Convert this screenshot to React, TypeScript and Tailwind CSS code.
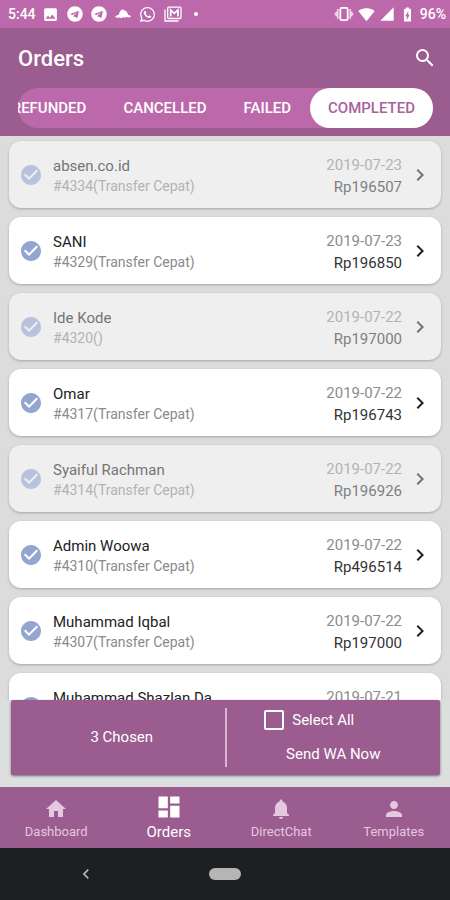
import { useState } from 'react';
import {
  MdBatteryChargingFull,
  MdCheckCircle,
  MdChevronLeft,
  MdChevronRight,
  MdDashboard,
  MdHome,
  MdImage,
  MdNotifications,
  MdPerson,
  MdSearch,
  MdSignalCellular4Bar,
  MdSignalWifi4Bar,
} from 'react-icons/md';
import { FaTelegram, FaWhatsapp } from 'react-icons/fa';

interface Order {
  id: string;
  name: string;
  payment: string;
  date: string;
  total: string;
  chosen: boolean;
}

const ORDERS: Order[] = [
  { id: '4334', name: 'absen.co.id', payment: 'Transfer Cepat', date: '2019-07-23', total: 'Rp196507', chosen: true },
  { id: '4329', name: 'SANI', payment: 'Transfer Cepat', date: '2019-07-23', total: 'Rp196850', chosen: false },
  { id: '4320', name: 'Ide Kode', payment: '', date: '2019-07-22', total: 'Rp197000', chosen: true },
  { id: '4317', name: 'Omar', payment: 'Transfer Cepat', date: '2019-07-22', total: 'Rp196743', chosen: false },
  { id: '4314', name: 'Syaiful Rachman', payment: 'Transfer Cepat', date: '2019-07-22', total: 'Rp196926', chosen: true },
  { id: '4310', name: 'Admin Woowa', payment: 'Transfer Cepat', date: '2019-07-22', total: 'Rp496514', chosen: false },
  { id: '4307', name: 'Muhammad Iqbal', payment: 'Transfer Cepat', date: '2019-07-22', total: 'Rp197000', chosen: false },
  { id: '4305', name: 'Muhammad Shazlan Da', payment: 'Transfer Cepat', date: '2019-07-21', total: 'Rp197000', chosen: false },
];

const TABS = ['REFUNDED', 'CANCELLED', 'FAILED', 'COMPLETED'];

const NAV_ITEMS = [
  { label: 'Dashboard', icon: MdHome },
  { label: 'Orders', icon: MdDashboard },
  { label: 'DirectChat', icon: MdNotifications },
  { label: 'Templates', icon: MdPerson },
];

function HatIcon() {
  return (
    <svg viewBox="0 0 16 12" className="h-3 w-4" fill="currentColor" aria-hidden="true">
      <path d="M0 8.8c1.100-1.400 2.500-1.900 3.600-1.900C4.400 4.400 5.600 1.800 7.600 1.600c1.300-.1 1.500.8 2.500 1.200 1.700.6 2.500 1.900 2.900 3.900 1.200.3 2.300.9 3 2.100-1.600.9-3.300.9-4.500 0-.7 1-2 1.100-3 .3-1.300 1.100-2.900 1.300-4.200.3C2.900 10 1.200 9.800 0 8.800z" />
    </svg>
  );
}

function MailStackIcon() {
  return (
    <svg viewBox="0 0 18 16" className="h-4 w-[18px]" fill="none" stroke="currentColor" aria-hidden="true">
      <path d="M1 3.500V15h13.500" strokeWidth="1.300" />
      <rect x="3.700" y="1.200" width="13.300" height="11.300" rx="1" strokeWidth="1.300" />
      <path d="M6.700 10.500V4l3.600 3.300L14 4v6.500" strokeWidth="1.700" />
    </svg>
  );
}

function VibrateIcon() {
  return (
    <svg viewBox="0 0 20 14" className="h-3.5 w-5" fill="currentColor" aria-hidden="true">
      <rect x="6.300" y="0.900" width="7.400" height="12.200" rx="1.300" fill="none" stroke="currentColor" strokeWidth="1.800" />
      <path d="M4.500 2v10H3V9.500H1.500V8L0 7l1.500-1V4.500H3V2zM15.500 2v10H17V9.500h1.500V8L20 7l-1.500-1V4.500H17V2z" opacity="0.75" />
    </svg>
  );
}

function StatusBar() {
  return (
    <div className="flex h-7 shrink-0 items-center justify-between bg-[#bc69ac] pr-1 pl-2 text-sm font-medium">
      <div className="flex items-center gap-1.5">
        <span>5:44</span>
        <div className="flex items-center gap-2">
          <MdImage className="size-[17px]" />
          <FaTelegram className="size-4" />
          <FaTelegram className="size-4" />
          <HatIcon />
          <FaWhatsapp className="size-[17px]" />
          <MailStackIcon />
          <span className="ml-1 size-1 rounded-full bg-current" />
        </div>
      </div>
      <div className="flex items-center gap-1">
        <VibrateIcon />
        <MdSignalWifi4Bar className="size-[17px]" />
        <MdSignalCellular4Bar className="size-4" />
        <MdBatteryChargingFull className="size-[17px]" />
        <span>96%</span>
      </div>
    </div>
  );
}

function OrderCard({ order, onToggle }: { order: Order; onToggle: () => void }) {
  return (
    <li className={`h-[67px] shrink-0 rounded-xl shadow-sm shadow-black/20 ${order.chosen ? 'bg-[#efefef]' : 'bg-white'}`}>
      <button
        type="button"
        onClick={onToggle}
        className={`flex h-full w-full items-center pr-[9px] pl-2.5 text-left ${order.chosen ? 'opacity-60' : ''}`}
      >
        <MdCheckCircle className="mr-2.5 size-6 shrink-0 text-[#94a5d0]" />
        <div className="min-w-0 flex-1 pt-0.5">
          <p className="truncate text-[15px] leading-5 text-[#222]">{order.name}</p>
          <p className="text-sm leading-5 text-[#8a8a8a]">
            #{order.id}({order.payment})
          </p>
        </div>
        <div className="pt-0.5 text-right text-[15px] leading-[22px]">
          <p className="text-[#8c8c8c]">{order.date}</p>
          <p className="text-[#333]">{order.total}</p>
        </div>
        <MdChevronRight className="ml-1.5 size-6 shrink-0 text-[#222]" />
      </button>
    </li>
  );
}

function App() {
  const [orders, setOrders] = useState<Order[]>(ORDERS);
  const [activeTab, setActiveTab] = useState('COMPLETED');
  const [activeNav, setActiveNav] = useState('Orders');

  const chosenCount = orders.filter((order) => order.chosen).length;
  const allChosen = chosenCount === orders.length;

  const toggleOrder = (id: string) => {
    setOrders(orders.map((order) => (order.id === id ? { ...order, chosen: !order.chosen } : order)));
  };

  return (
    <div className="flex h-screen flex-col bg-[#dcdcdc] font-[Roboto,sans-serif] text-white">
      <StatusBar />

      <header className="shrink-0 bg-[#9b5c90] pr-[17px] pb-2 pl-[18px]">
        <div className="flex h-[60px] items-center justify-between">
          <h1 className="text-[22px] font-medium">Orders</h1>
          <button type="button" aria-label="Search" className="-mr-1">
            <MdSearch className="size-6" />
          </button>
        </div>
        <div className="rounded-full bg-[#bc69ac]">
          {/* Tabs are scrolled to the end, earlier ones run off the left side */}
          <div className="flex h-10 justify-end gap-px overflow-hidden">
            {TABS.map((tab) => (
              <button
                key={tab}
                type="button"
                onClick={() => setActiveTab(tab)}
                className={`shrink-0 rounded-full px-[18px] text-[15px] font-medium ${
                  tab === activeTab ? 'bg-white text-[#a8639b]' : ''
                }`}
              >
                {tab}
              </button>
            ))}
          </div>
        </div>
      </header>

      <main className="flex min-h-0 flex-1 flex-col">
        <ul className="flex min-h-0 flex-1 flex-col gap-[9px] overflow-hidden px-[9px] pt-[5px]">
          {orders.map((order) => (
            <OrderCard key={order.id} order={order} onToggle={() => toggleOrder(order.id)} />
          ))}
        </ul>

        {/* Action panel */}
        <div className="shrink-0 bg-[#dcdfde] pr-[10px] pb-3 pl-[11px]">
          <div className="grid h-[75px] grid-cols-[1fr_auto_1fr] items-center rounded-xs bg-[#9b5c90] text-[15px] shadow-sm shadow-black/40">
            <p className="pl-2 text-center">{chosenCount} Chosen</p>
            <div className="h-[59px] w-0.5 bg-[#d9b5d3]" />
            <div className="flex flex-col items-center gap-3.5 pb-0.5">
              <label className="-ml-12 flex items-center gap-2 leading-5">
                <input
                  type="checkbox"
                  checked={allChosen}
                  onChange={() => setOrders(orders.map((order) => ({ ...order, chosen: !allChosen })))}
                  className="size-5 appearance-none rounded-xs border-2 border-white checked:bg-white"
                />
                Select All
              </label>
              <button type="button" className="leading-5">
                Send WA Now
              </button>
            </div>
          </div>
        </div>
      </main>

      <nav className="flex h-[61px] shrink-0 bg-[#9b5c90]">
        {NAV_ITEMS.map(({ label, icon: Icon }) => (
          <button
            key={label}
            type="button"
            onClick={() => setActiveNav(label)}
            className={`flex flex-1 flex-col items-center justify-end pb-[5px] ${
              label === activeNav ? 'text-[15px] text-white' : 'text-[13px] text-[#e3c8df]'
            }`}
          >
            <Icon className={label === activeNav ? 'size-7' : 'size-6'} />
            <span className="leading-[22px]">{label}</span>
          </button>
        ))}
      </nav>

      <div className="grid h-[52px] shrink-0 grid-cols-3 items-center justify-items-center bg-[#1e1f23] px-4 text-[#b5b5b5]">
        <button type="button" aria-label="Back">
          <MdChevronLeft className="size-5" />
        </button>
        <button type="button" aria-label="Home" className="h-3 w-8 rounded-full bg-current" />
      </div>
    </div>
  );
}

export default App;
